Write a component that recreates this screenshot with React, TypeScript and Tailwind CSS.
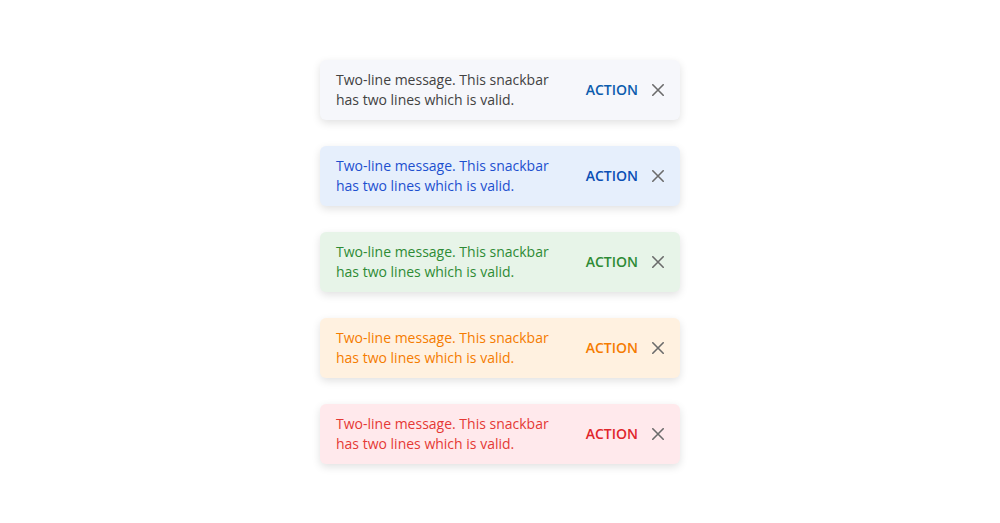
import React from "react";

const variants = [
  { bg: "bg-[#f6f7fb]", text: "text-[#424242]", action: "text-[#0b5cad]" },
  { bg: "bg-[#e6effc]", text: "text-[#1d4fcf]", action: "text-[#0b4fb5]" },
  { bg: "bg-[#e7f4e8]", text: "text-[#2e8b35]", action: "text-[#2e8b35]" },
  { bg: "bg-[#fff1e0]", text: "text-[#f57c00]", action: "text-[#f57c00]" },
  { bg: "bg-[#ffe9ec]", text: "text-[#e53935]", action: "text-[#e0262b]" },
];

function CloseIcon() {
  return (
    <svg width="12" height="12" viewBox="0 0 12 12" fill="none" className="text-[#6b6b6b]">
      <path d="M0.8 0.8L11.2 11.2M11.2 0.8L0.8 11.2" stroke="currentColor" strokeWidth="1.6" strokeLinecap="round" />
    </svg>
  );
}

export default function App() {
  return (
    <div
      className="w-[1000px] h-[523px] bg-white flex flex-col items-center pt-[60px] gap-[26px]"
      style={{ fontFamily: '"Open Sans", "Noto Sans", sans-serif' }}
    >
      {variants.map((v, i) => (
        <div
          key={i}
          className={`w-[360px] h-[60px] rounded-[6px] ${v.bg} flex items-center pl-4 pr-4 shadow-[0_3px_8px_rgba(0,0,0,0.12)]`}
        >
          <div className={`flex-1 text-[14px] leading-[20px] ${v.text}`}>
            Two-line message. This snackbar
            <br />
            has two lines which is valid.
          </div>
          <div className={`text-[14px] font-semibold mb-[2px] ${v.action}`}>ACTION</div>
          <div className="ml-[14px] flex items-center">
            <CloseIcon />
          </div>
        </div>
      ))}
    </div>
  );
}
